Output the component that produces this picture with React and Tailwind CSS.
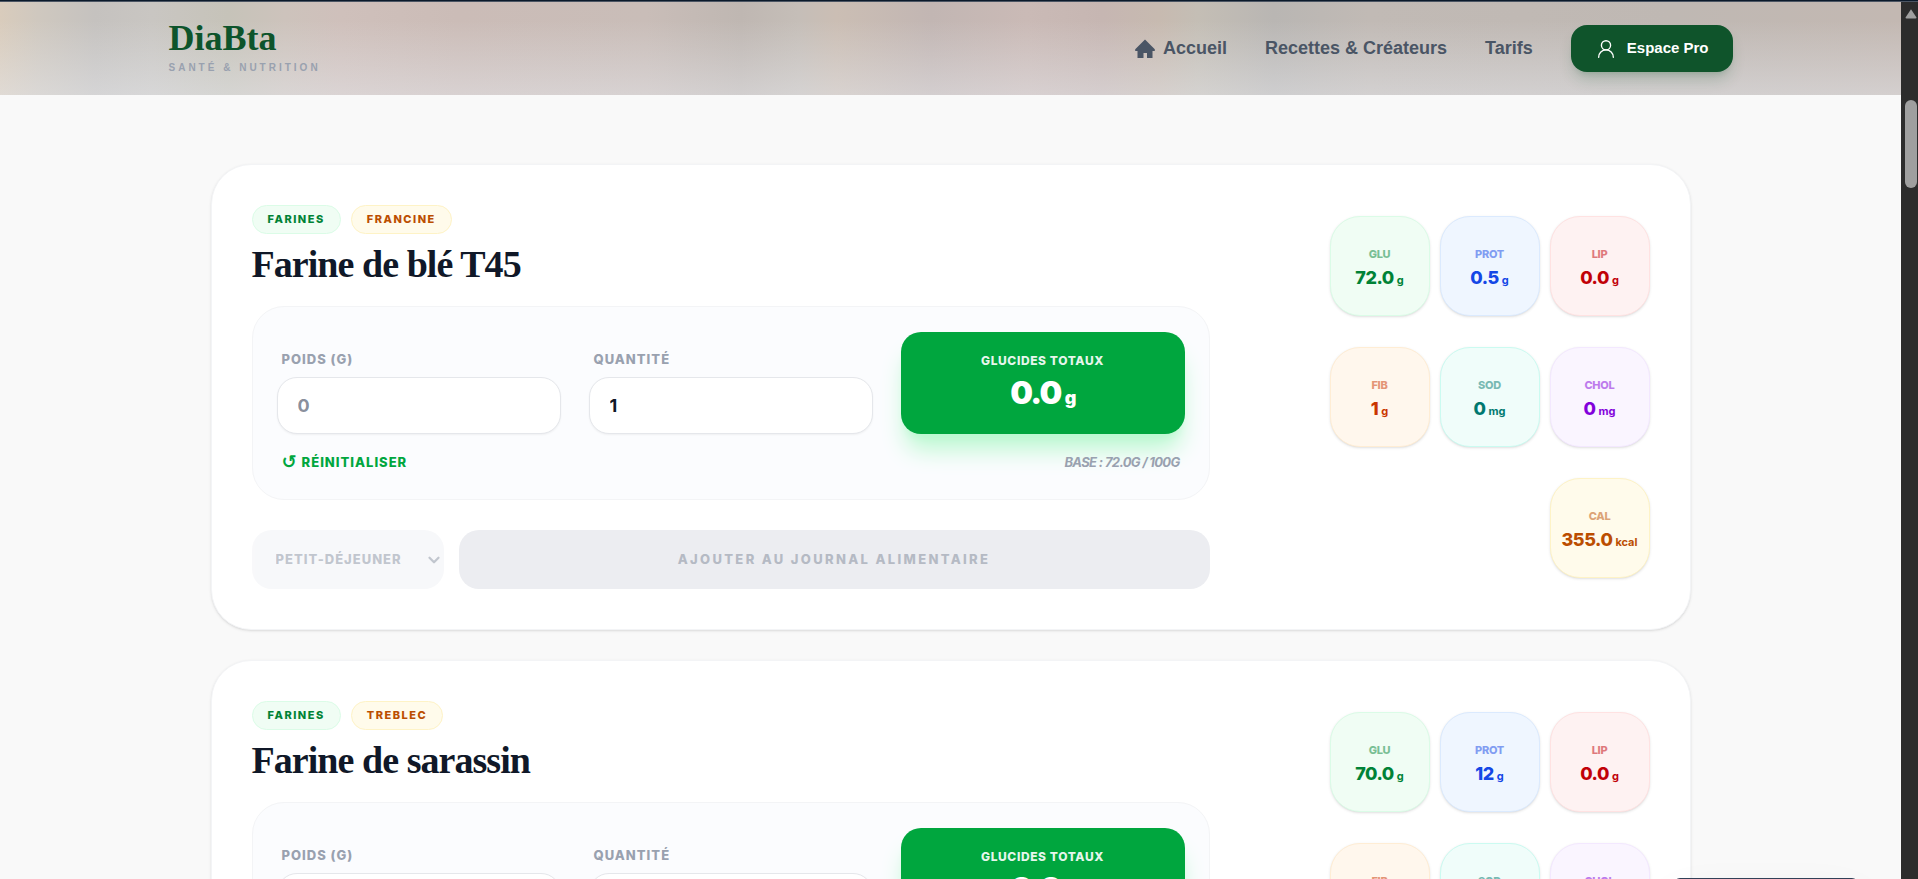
// src/App.jsx
import React, { useState } from 'react';
import { ChevronDown, UserRound } from 'lucide-react';

const foods = [
  {
    id: 1,
    category: 'Farines',
    brand: 'Francine',
    name: 'Farine de blé T45',
    carbs: '72.0',
    nutrients: { glu: '72.0', prot: '0.5', lip: '0.0', fib: '1', sod: '0', chol: '0', cal: '355.0' },
  },
  {
    id: 2,
    category: 'Farines',
    brand: 'Treblec',
    name: 'Farine de sarassin',
    carbs: '70.0',
    nutrients: { glu: '70.0', prot: '12', lip: '0.0', fib: '1', sod: '0', chol: '0', cal: '355.0' },
  },
];

const tiles = [
  { key: 'glu', label: 'Glu', unit: 'g', style: 'bg-green-50 border-green-100 text-green-700' },
  { key: 'prot', label: 'Prot', unit: 'g', style: 'bg-blue-50 border-blue-100 text-blue-700' },
  { key: 'lip', label: 'Lip', unit: 'g', style: 'bg-red-50 border-red-100 text-red-700' },
  { key: 'fib', label: 'Fib', unit: 'g', style: 'bg-orange-50 border-orange-100 text-orange-700' },
  { key: 'sod', label: 'Sod', unit: 'mg', style: 'bg-teal-50 border-teal-100 text-teal-700' },
  { key: 'chol', label: 'Chol', unit: 'mg', style: 'bg-purple-50 border-purple-100 text-purple-700' },
  { key: 'cal', label: 'Cal', unit: 'kcal', style: 'bg-amber-50 border-amber-100 text-amber-700' },
];

const Header = () => (
  <header className="shrink-0 bg-[linear-gradient(to_right,#d9ccbc_0%,#cfc8bf_2%,#c5c2bf_5%,#c9c6c2_8%,#c6c3b9_12%,#cdc3bc_15%,#cfc0bb_18%,#cbbcb7_24%,#c9bdb8_34%,#bfb7b2_39%,#c5beb8_42%,#cbbeb4_44%,#c2b6b3_49%,#cabab6_54%,#c6b6b2_58%,#c7bab0_61%,#c4beb5_63%,#b9b6b3_67%,#c1bab5_72%,#bfb8b3_88%,#c3b8b2_100%)]">
    <div className="bg-linear-to-b from-transparent from-20% to-[#e9ecf2]/45">
      <div className="mx-auto flex h-[93px] max-w-[1564px] items-center justify-between">
        <a href="#" className="flex flex-col">
          <span className="font-['Liberation_Serif',serif] text-[36px] leading-8 font-bold text-green-900">
            DiaBta
          </span>
          <span className="mt-[6px] text-[10px] leading-4 font-bold tracking-[3px] text-gray-400 uppercase">
            Santé &amp; Nutrition
          </span>
        </a>
        <nav className="flex items-center gap-[38px] text-[18px] font-bold text-gray-600">
          <a href="#" className="flex items-center gap-2">
            <svg className="h-5 w-5" viewBox="0 0 20 20" fill="currentColor" aria-hidden="true">
              <path d="M10 .5 19.800 10.200V12H17.500V19H12V14H8.500V19H2.500V12H.2V10.200z" />
            </svg>
            Accueil
          </a>
          <a href="#">Recettes &amp; Créateurs</a>
          <a href="#">Tarifs</a>
          <button className="flex h-[47px] items-center gap-[10px] rounded-2xl bg-[#0f542b] px-6 text-[15px] text-white shadow-lg shadow-green-900/20">
            <UserRound size={22} strokeWidth={1.5} />
            Espace Pro
          </button>
        </nav>
      </div>
    </div>
  </header>
);

const NutrientTile = ({ label, value, unit, style }) => (
  <div className={`flex h-[100px] w-[100px] flex-col items-center justify-center rounded-[30px] border pt-[5px] shadow-sm ${style}`}>
    <span className="text-[11px] leading-4 font-extrabold tracking-tight uppercase opacity-50">{label}</span>
    <span className="mt-1 flex items-baseline gap-[3px] text-[18px] leading-6 font-extrabold tracking-tight">
      {value}
      <small className="text-[11px] font-bold tracking-normal">{unit}</small>
    </span>
  </div>
);

const FoodCard = ({ food }) => {
  const [weight, setWeight] = useState('');
  const [quantity, setQuantity] = useState('1');
  const total = ((Number(weight) || 0) * (Number(quantity) || 0) * Number(food.carbs)) / 100;

  const reset = () => {
    setWeight('');
    setQuantity('1');
  };

  return (
    <article className="flex items-center gap-10 rounded-[40px] border border-gray-100 bg-white p-10 shadow-sm">
      <div className="flex-1">
        <div className="flex gap-[10px] text-[11px] leading-[27px] font-extrabold tracking-[1.5px] uppercase">
          <span className="rounded-full border border-green-100 bg-green-50 px-[15px] text-green-700">{food.category}</span>
          <span className="rounded-full border border-amber-100 bg-amber-50 px-[15px] text-amber-700">{food.brand}</span>
        </div>
        <h2 className="mt-2 font-['Liberation_Serif',serif] text-[38px] leading-[44px] font-bold tracking-tight text-gray-900">
          {food.name}
        </h2>

        <div className="mt-5 rounded-[32px] border border-gray-100 bg-[#fbfcfe] py-[25px] pr-6 pl-6">
          <div className="grid grid-cols-3 items-end gap-7">
            <div>
              <label htmlFor={`weight-${food.id}`} className="mb-2 block pl-[5px] text-[13px] leading-5 font-extrabold tracking-[1px] text-gray-400 uppercase">
                Poids (g)
              </label>
              <input
                id={`weight-${food.id}`}
                value={weight}
                onChange={(e) => setWeight(e.target.value)}
                placeholder="0"
                className="block h-[57px] w-full rounded-[20px] border border-gray-200 bg-white px-5 text-[18px] font-bold text-gray-900 shadow-xs placeholder:text-gray-500/80"
              />
            </div>
            <div>
              <label htmlFor={`quantity-${food.id}`} className="mb-2 block pl-[5px] text-[13px] leading-5 font-extrabold tracking-[1px] text-gray-400 uppercase">
                Quantité
              </label>
              <input
                id={`quantity-${food.id}`}
                value={quantity}
                onChange={(e) => setQuantity(e.target.value)}
                className="block h-[57px] w-full rounded-[20px] border border-gray-200 bg-white px-5 text-[18px] font-bold text-gray-900 shadow-xs"
              />
            </div>
            <div className="flex h-[102px] flex-col items-center justify-center rounded-[20px] bg-green-600 pt-[5px] text-white shadow-xl shadow-green-200">
              <span className="text-[12px] leading-4 font-extrabold tracking-wider uppercase opacity-90">Glucides totaux</span>
              <span className="mt-1 flex items-baseline gap-1 text-[32px] leading-10 font-black tracking-tighter">
                {total.toFixed(1)}
                <small className="text-[18px]">g</small>
              </span>
            </div>
          </div>
          <div className="mt-4 flex items-center justify-between px-[5px] text-[13px] leading-6">
            <button onClick={reset} className="flex items-center gap-1 font-extrabold tracking-[1px] text-green-600 uppercase">
              <span className="font-['DejaVu_Sans',sans-serif] text-[18px]">↺</span>
              Réinitialiser
            </button>
            <span className="font-bold tracking-tighter text-gray-400 uppercase italic">Base : {food.carbs}g / 100g</span>
          </div>
        </div>

        <div className="mt-[30px] flex gap-[15px] text-[13px] font-extrabold uppercase">
          <div className="relative w-48 opacity-60">
            <select
              aria-label="Repas"
              disabled
              className="h-[59px] w-full appearance-none rounded-[20px] bg-[#f3f4f7] px-6 tracking-[1px] text-gray-400 uppercase"
            >
              <option>Petit-déjeuner</option>
            </select>
            <ChevronDown size={18} strokeWidth={3} className="pointer-events-none absolute top-[21px] right-px text-gray-400" />
          </div>
          <button disabled className="h-[59px] flex-1 rounded-[20px] bg-[#ecedf1] tracking-[0.18em] text-[#b5bac4] uppercase">
            Ajouter au journal alimentaire
          </button>
        </div>
      </div>

      <div className="flex w-[400px] flex-wrap justify-end gap-x-[10px] gap-y-[31px] pl-[80px]">
        {tiles.map((tile) => (
          <NutrientTile key={tile.key} label={tile.label} unit={tile.unit} style={tile.style} value={food.nutrients[tile.key]} />
        ))}
      </div>
    </article>
  );
};

const Scrollbar = () => (
  <div className="flex w-[17px] shrink-0 flex-col items-end bg-[#2c2c2c] pt-[6px] pr-px">
    <svg className="h-3 w-3" viewBox="0 0 12 12" fill="#9f9f9f" aria-hidden="true">
      <path d="M6 1.200 11.500 9.500Q11.500 10.500 10.500 10.500H1.500Q.5 10.500.5 9.500z" />
    </svg>
    <div className="mt-20 h-[88px] w-3 rounded-full bg-[#9f9f9f]" />
  </div>
);

const App = () => (
  <div className="flex h-screen flex-col overflow-hidden bg-[#f9f9f9] font-['Liberation_Sans',Arial,sans-serif]">
    <div className="h-[2px] shrink-0 border-b border-[#4b5563] bg-[#0b1a2b]" />
    <div className="flex min-h-0 flex-1">
      <div className="flex min-w-0 flex-1 flex-col">
        <Header />
        <main className="min-h-0 flex-1 overflow-hidden pt-[69px] font-['Inter',sans-serif]">
          <div className="mx-auto flex max-w-[1480px] flex-col gap-[30px]">
            {foods.map((food) => (
              <FoodCard key={food.id} food={food} />
            ))}
          </div>
        </main>
      </div>
      <Scrollbar />
    </div>
    <div className="fixed right-[60px] -bottom-[63px] h-16 w-[184px] rounded-md bg-slate-700 shadow-2xl" />
  </div>
);

export default App;
